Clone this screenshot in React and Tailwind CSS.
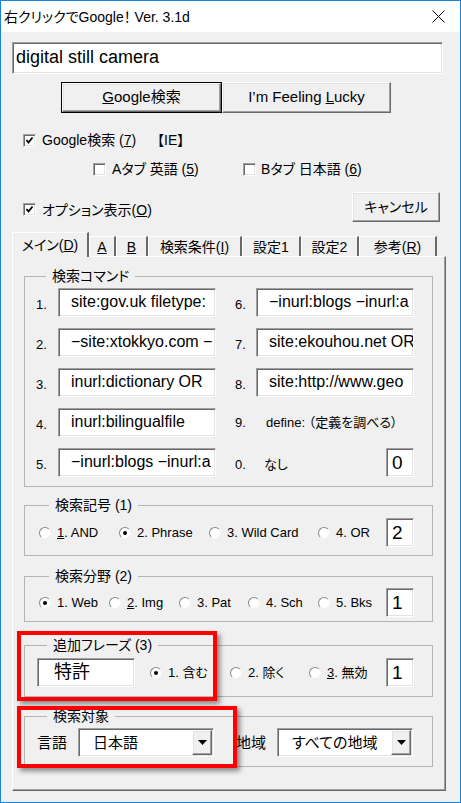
import React from 'react';

const FONT = "font-['Liberation_Sans','Noto_Sans_CJK_JP',sans-serif] [font-feature-settings:'palt']";
const SUNKEN = 'bg-white border border-t-[#a0a0a0] border-l-[#a0a0a0] border-r-white border-b-white shadow-[inset_1px_1px_0_#696969,inset_-1px_-1px_0_#e3e3e3]';
const RAISED = 'bg-[#f0f0f0] border border-t-white border-l-white border-r-[#696969] border-b-[#696969] shadow-[inset_-1px_-1px_0_#a0a0a0,inset_1px_1px_0_#e3e3e3]';

// only the part that shows in the narrow boxes
const LEFT_CMDS = [
  'site:gov.uk filetype:',
  '−site:xtokkyo.com −',
  'inurl:dictionary OR',
  'inurl:bilingualfile',
  '−inurl:blogs −inurl:a',
];
const RIGHT_CMDS = [
  '−inurl:blogs −inurl:a',
  'site:ekouhou.net OR',
  'site:http://www.geo',
];

function CheckBox({ checked }) {
  return (
    <span className={`w-[13px] h-[13px] shrink-0 flex items-center justify-center ${SUNKEN}`}>
      {checked && (
        <svg width="9" height="9" viewBox="0 0 9 9">
          <path d="M1.5 4 L3.5 6.5 L7.5 1.5" fill="none" stroke="#000" strokeWidth="1.8" />
        </svg>
      )}
    </span>
  );
}

function Radio({ checked }) {
  return (
    <span className="w-[12px] h-[12px] shrink-0 rounded-full bg-white border border-t-[#8a8a8a] border-l-[#8a8a8a] border-r-[#f4f4f4] border-b-[#f4f4f4] flex items-center justify-center">
      {checked && <span className="w-[4px] h-[4px] rounded-full bg-black" />}
    </span>
  );
}

function RadioItem({ w, checked, children }) {
  return (
    <div className={`flex items-center gap-[6px] ${w}`}>
      <Radio checked={checked} />
      <span className="text-[13px] leading-[16px]">{children}</span>
    </div>
  );
}

function SmallBox({ value }) {
  return (
    <div className={`w-[28px] h-[29px] pl-[5px] text-[19px] leading-[27px] ${SUNKEN}`}>{value}</div>
  );
}

function Group({ label, className, children }) {
  return (
    <fieldset className={`w-[409px] border border-[#b4b4b4] ${className}`}>
      <legend className="ml-[10px] px-[6px] text-[14px] leading-[16px]">{label}</legend>
      {children}
    </fieldset>
  );
}

function CmdInput({ text }) {
  return (
    <div className={`w-[158px] h-[29px] pl-[12px] overflow-hidden whitespace-nowrap text-[16px] leading-[26px] ${SUNKEN}`}>
      {text}
    </div>
  );
}

function Select({ value }) {
  return (
    <div className={`w-[136px] h-[29px] flex items-center justify-between ${SUNKEN}`}>
      <span className="pl-[14px] text-[15px] leading-[18px]">{value}</span>
      <span className={`w-[20px] h-[25px] mr-[1px] flex items-center justify-center ${RAISED}`}>
        <svg width="9" height="5" viewBox="0 0 9 5"><path d="M0 0 H9 L4.5 5 Z" fill="#000" /></svg>
      </span>
    </div>
  );
}

export default function App() {
  return (
    <div className={`relative w-[461px] h-[803px] border border-[#1883d7] bg-[#f0f0f0] text-black ${FONT}`}>
      {/* Title bar */}
      <div className="h-[31px] bg-white flex items-center justify-between pl-[3px] pr-[15px]">
        <span className="text-[14px] leading-[18px]">右クリックでGoogle！ Ver. 3.1d</span>
        <svg width="13" height="13" viewBox="0 0 13 13">
          <path d="M0.5 0.5 L12.5 12.5 M12.5 0.5 L0.5 12.5" stroke="#000" strokeWidth="1" />
        </svg>
      </div>

      {/* Query */}
      <div className={`ml-[11px] mt-[10px] w-[431px] h-[32px] pl-[3px] text-[18px] leading-[28px] ${SUNKEN}`}>
        digital still camera
      </div>

      <div className="flex ml-[60px] mt-[8px]">
        <button className="w-[161px] h-[31px] border border-black">
          <div className={`h-full flex items-center justify-center text-[15px] ${RAISED}`}>
            <span><u>G</u>oogle検索</span>
          </div>
        </button>
        <button className={`w-[169px] h-[31px] flex items-center justify-center text-[15px] ${RAISED}`}>
          <span>I’m Feeling <u>L</u>ucky</span>
        </button>
      </div>

      {/* Checkboxes */}
      <div className="mt-[19px] h-[16px] pl-[22px] flex items-center text-[14px] leading-[16px]">
        <CheckBox checked />
        <span className="ml-[6px] w-[115px]">Google検索 (<u>7</u>)</span>
        <span>【IE】</span>
      </div>
      <div className="mt-[13px] h-[16px] pl-[92px] flex items-center text-[14px] leading-[16px]">
        <div className="w-[150px] flex items-center">
          <CheckBox />
          <span className="ml-[6px]">Aタブ 英語 (<u>5</u>)</span>
        </div>
        <CheckBox />
        <span className="ml-[5px]">Bタブ 日本語 (<u>6</u>)</span>
      </div>
      <div className="mt-[15px] h-[30px] pl-[22px] pr-[20px] flex items-center justify-between text-[14px] leading-[16px]">
        <div className="flex items-center mt-[5px]">
          <CheckBox checked />
          <span className="ml-[6px]">オプション表示(<u>O</u>)</span>
        </div>
        <button className={`w-[88px] h-[30px] flex items-center justify-center ${RAISED}`}>キャンセル</button>
      </div>

      {/* Tabs */}
      <div className="mt-[10px] ml-[11px] flex items-end text-[14px] leading-[16px]">
        <div className="relative z-10 -mb-px w-[77px] h-[25px] pt-[4px] text-center bg-[#f0f0f0] border-t border-l border-r-2 border-t-white border-l-white border-r-[#696969]">
          メイン(<u>D</u>)
        </div>
        {[
          ['w-[27px]', <u key="a">A</u>],
          ['w-[32px]', <u key="b">B</u>],
          ['w-[94px]', <span key="c">検索条件(<u>I</u>)</span>],
          ['w-[59px]', '設定1'],
          ['w-[58px]', '設定2'],
          ['w-[78px]', <span key="r">参考(<u>R</u>)</span>],
        ].map(([w, label], i) => (
          <div key={i} className={`${w} h-[20px] pt-[2px] text-center border-t border-l border-r-2 border-t-white border-l-white border-r-[#696969]`}>
            {label}
          </div>
        ))}
      </div>

      <div className="ml-[11px] w-[434px] h-[535px] pl-[11px] pt-[11px] border border-t-white border-l-white border-r-[#696969] border-b-[#696969] shadow-[inset_-1px_-1px_0_#a0a0a0]">
        <Group label="検索コマンド" className="pl-[11px] pt-[4px] pb-[9px]">
          <div className="grid grid-cols-[180px_179px] gap-x-[19px] gap-y-[11px] text-[13px]">
            {[0, 1, 2, 3, 4].map((r) => (
              <React.Fragment key={r}>
                <div className="flex items-end">
                  <span className="w-[22px] pb-[4px] leading-[16px]">{r + 1}.</span>
                  <CmdInput text={LEFT_CMDS[r]} />
                </div>
                {r < 3 ? (
                  <div className="flex items-end">
                    <span className="w-[21px] pb-[4px] leading-[16px]">{r + 6}.</span>
                    <CmdInput text={RIGHT_CMDS[r]} />
                  </div>
                ) : r === 3 ? (
                  <div className="flex items-center h-[29px] leading-[16px]">
                    <span className="w-[31px]">9.</span>
                    <span>define: （定義を調べる）</span>
                  </div>
                ) : (
                  <div className="flex items-end">
                    <span className="w-[29px] pb-[4px] leading-[16px]">0.</span>
                    <span className="flex-1 pb-[4px] leading-[16px]">なし</span>
                    <SmallBox value="0" />
                  </div>
                )}
              </React.Fragment>
            ))}
          </div>
        </Group>

        <Group label="検索記号 (1)" className="mt-[10px] pl-[14px] pt-[5px] pb-[8px]">
          <div className="flex items-center">
            <RadioItem w="w-[80px]"><u>1</u>. AND</RadioItem>
            <RadioItem w="w-[90px]" checked>2. Phrase</RadioItem>
            <RadioItem w="w-[109px]">3. Wild Card</RadioItem>
            <RadioItem w="w-[68px]">4. OR</RadioItem>
            <SmallBox value="2" />
          </div>
        </Group>

        <Group label="検索分野 (2)" className="mt-[12px] pl-[14px] pt-[4px] pb-[4px]">
          <div className="flex items-center">
            <RadioItem w="w-[70px]" checked>1. Web</RadioItem>
            <RadioItem w="w-[70px]"><u>2</u>. Img</RadioItem>
            <RadioItem w="w-[69px]">3. Pat</RadioItem>
            <RadioItem w="w-[70px]">4. Sch</RadioItem>
            <RadioItem w="w-[68px]">5. Bks</RadioItem>
            <SmallBox value="1" />
          </div>
        </Group>

        <Group label="追加フレーズ (3)" className="mt-[15px] pl-[12px] pt-[5px] pb-[9px]">
          <div className="flex items-center">
            <div className={`w-[98px] h-[29px] pl-[16px] text-[18px] leading-[26px] ${SUNKEN}`}>特許</div>
            <div className="w-[15px]" />
            <RadioItem w="w-[80px]" checked>1. 含む</RadioItem>
            <RadioItem w="w-[79px]">2. 除く</RadioItem>
            <RadioItem w="w-[77px]"><u>3</u>. 無効</RadioItem>
            <SmallBox value="1" />
          </div>
        </Group>

        <Group label="検索対象" className="mt-[11px] pl-[12px] pt-[4px] pb-[9px]">
          <div className="flex items-center text-[15px] leading-[18px]">
            <span className="w-[41px]">言語</span>
            <Select value="日本語" />
            <span className="ml-[22px] w-[41px]">地域</span>
            <Select value="すべての地域" />
          </div>
        </Group>
      </div>

      {/* Red highlight frames */}
      <div className="absolute left-[16px] top-[630px] w-[200px] h-[70px] border-4 border-[#ff0000] shadow-[3px_3px_5px_rgba(0,0,0,0.45)]" />
      <div className="absolute left-[16px] top-[705px] w-[220px] h-[62px] border-4 border-[#ff0000] shadow-[3px_3px_5px_rgba(0,0,0,0.45)]" />
    </div>
  );
}
